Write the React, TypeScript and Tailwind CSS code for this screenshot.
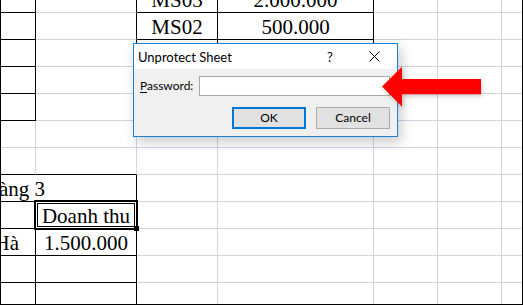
import React from "react";

type Cell = { t?: string; rb: boolean | "none"; bb: boolean; span?: number; j?: "c" | "end"; pr?: string };

const g = (): Cell => ({ rb: false, bb: false });
const tail = (): Cell[] => [g(), g(), { rb: "none", bb: false }];

const rows: Cell[][] = [
  [{ rb: true, bb: true }, { rb: true, bb: false }, { t: "MS03", rb: true, bb: true, j: "c" }, { t: "2.000.000", rb: true, bb: true, j: "c" }, ...tail()],
  [{ rb: true, bb: true }, { rb: true, bb: false }, { t: "MS02", rb: true, bb: true, j: "c" }, { t: "500.000", rb: true, bb: true, j: "c" }, ...tail()],
  [{ rb: true, bb: true }, { rb: true, bb: false }, { rb: true, bb: true }, { rb: true, bb: true }, ...tail()],
  [{ rb: true, bb: true }, { rb: true, bb: false }, { rb: true, bb: false }, { rb: true, bb: false }, ...tail()],
  [{ rb: true, bb: true }, g(), g(), g(), ...tail()],
  [g(), g(), g(), g(), ...tail()],
  [{ rb: false, bb: true }, { rb: false, bb: true }, g(), g(), ...tail()],
  [{ t: "Doanh thu cửa hàng 3", rb: true, bb: true, span: 2, j: "end", pr: "pr-[91px]" }, g(), g(), ...tail()],
  [{ rb: true, bb: true }, { t: "Doanh thu", rb: true, bb: true, j: "c" }, g(), g(), ...tail()],
  [{ t: "Hà", rb: true, bb: true, j: "end", pr: "pr-[16px]" }, { t: "1.500.000", rb: true, bb: true, j: "c" }, g(), g(), ...tail()],
  [{ rb: true, bb: true }, { rb: true, bb: true }, g(), g(), ...tail()],
  [{ rb: true, bb: true }, { rb: true, bb: true }, g(), g(), ...tail()],
];

function SheetCell({ c }: { c: Cell }) {
  const right = c.rb === "none" ? "" : c.rb ? "border-r border-r-black" : "border-r border-r-[#d0d4e0]";
  const bottom = c.bb ? "border-b border-b-black" : "border-b border-b-[#d0d4e0]";
  const just = c.j === "end" ? "justify-end" : "justify-center";
  const span = c.span === 2 ? "col-span-2" : "";
  return (
    <div className={`flex items-end whitespace-nowrap ${just} ${right} ${bottom} ${span} ${c.pr ?? ""}`}>
      {c.t ? <span className="leading-[24px]">{c.t}</span> : null}
    </div>
  );
}

export default function App() {
  return (
    <div className="relative w-[523px] h-[305px] overflow-hidden bg-white border-l border-r border-b border-black">
      <div className="grid grid-cols-[35px_101px_81px_156px_64px_64px_20px] auto-rows-[27px] -mt-[14px] [font-family:'Liberation_Serif',serif] text-[21px] text-black">
        {rows.map((r, i) => r.map((c, j) => <SheetCell key={`${i}-${j}`} c={c} />))}
      </div>

      {/* selection */}
      <div className="absolute left-[33px] top-[200px] w-[104px] h-[30px] border-[4px] border-double border-black" />
      <div className="absolute left-[133px] top-[226px] w-[5px] h-[5px] bg-black" />

      {/* dialog */}
      <div className="absolute left-[132px] top-[43px] w-[265px] h-[94px] border border-[#1883d7] bg-[#f0f0f0] shadow-[3px_5px_12px_rgba(0,0,0,0.22)] flex flex-col [font-family:Lato,sans-serif] text-[12px] text-black">
        <div className="h-[25px] bg-white flex items-center pl-[4px] pr-[17px]">
          <span className="text-[13px] leading-[16px]">Unprotect Sheet</span>
          <span className="ml-auto w-[12px] text-center mr-[33px] text-[13px] leading-[16px]">?</span>
          <svg width="11" height="11" viewBox="0 0 11 11" className="block">
            <path d="M0.5 0.5 L10.5 10.5 M10.5 0.5 L0.5 10.5" stroke="#000" strokeWidth="1" />
          </svg>
        </div>
        <div className="flex-1 flex flex-col pt-[7px] pl-[6px] pr-[7px]">
          <div className="flex items-center h-[20px]">
            <span className="leading-[16px]">
              <span className="underline underline-offset-2">P</span>assword:
            </span>
            <div className="ml-auto w-[191px] h-[20px] border border-[#a8a8a8] bg-white" />
          </div>
          <div className="flex justify-end gap-[10px] mt-[11px]">
            <div className="w-[74px] h-[22px] border-2 border-[#0078d7] bg-[#e1e1e1] flex items-center justify-center leading-[16px]">OK</div>
            <div className="w-[74px] h-[22px] border border-[#adadad] bg-[#e1e1e1] flex items-center justify-center leading-[16px]">Cancel</div>
          </div>
        </div>
      </div>

      {/* arrow */}
      <svg
        className="absolute left-[375px] top-[60px] drop-shadow-[1px_2px_2px_rgba(0,0,0,0.2)]"
        width="110"
        height="52"
        viewBox="0 0 110 52"
      >
        <polygon points="6,26.5 26,6.7 26,19 105,19 105,34.3 26,34.3 26,46.7" fill="#ff0000" />
      </svg>
    </div>
  );
}
